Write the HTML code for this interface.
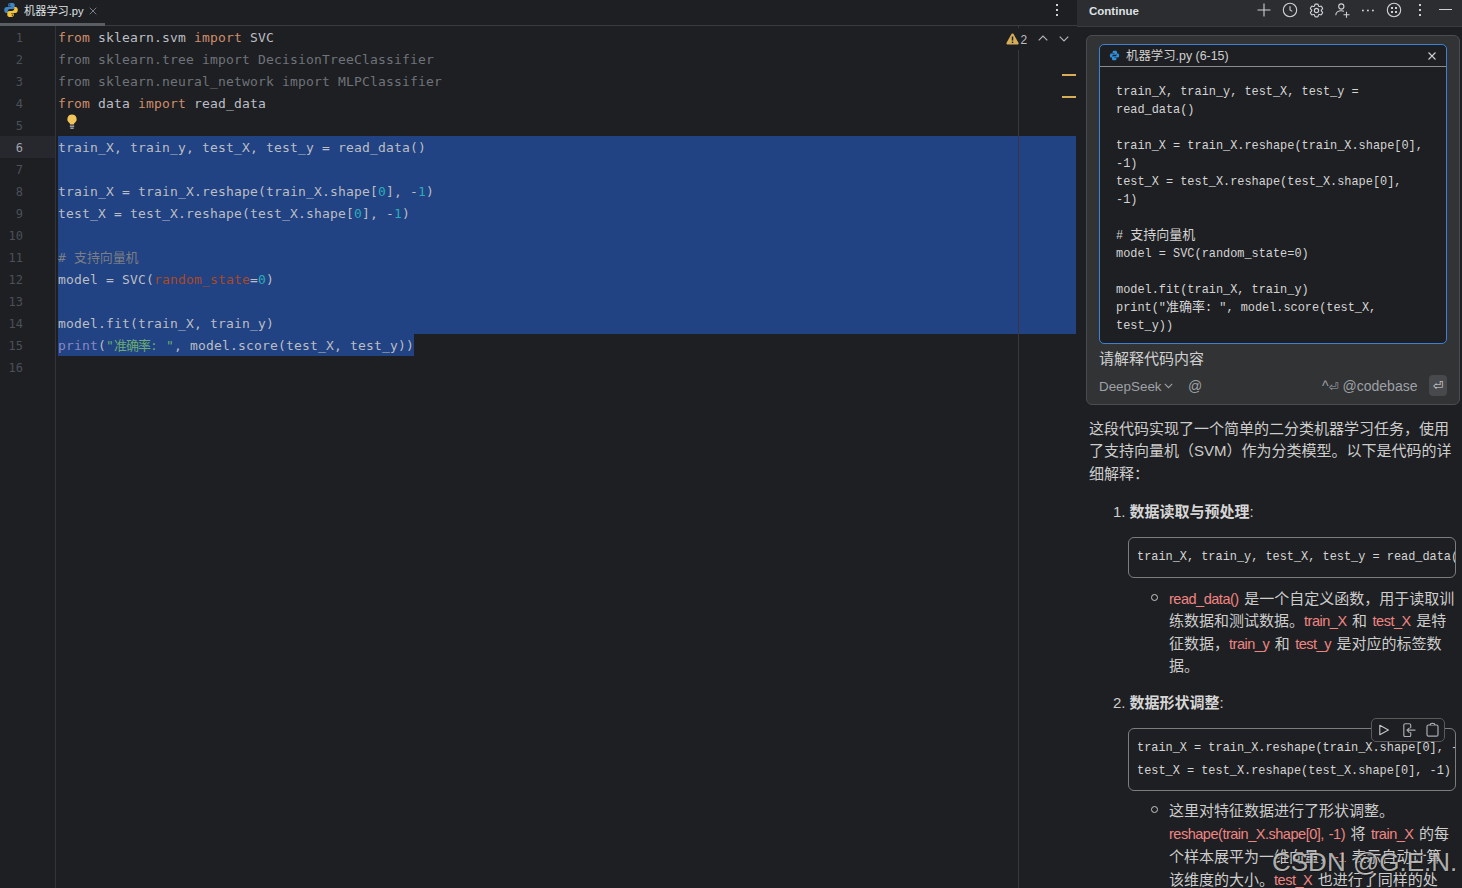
<!DOCTYPE html>
<html lang="zh-CN">
<head>
<meta charset="utf-8">
<title>机器学习.py</title>
<style>
*{box-sizing:border-box;margin:0;padding:0}
html,body{width:1462px;height:888px;overflow:hidden;background:#1e1f22}
body{position:relative;font-family:"Liberation Sans","Noto Sans CJK SC",sans-serif;color:#bcbec4}
.abs{position:absolute}
/* ---------- editor ---------- */
#editor{left:0;top:0;width:1077px;height:888px;background:#1e1f22;overflow:hidden}
#tabbar{left:0;top:0;width:1077px;height:26px;border-bottom:1px solid #393b40}
#tabul{left:0;top:23px;width:105px;height:3px;background:#5a5d63}
#tabname{left:24px;top:4px;font-size:11.2px;line-height:15px;color:#dfe1e5;white-space:nowrap}
#gutterline{left:55px;top:26px;width:1px;height:862px;background:#313438}
#marginline{left:1018px;top:26px;width:1px;height:862px;background:#36383d}
#caretrow{left:0;top:136px;width:55px;height:22px;background:#26282e}
.sel{background:#214283}
#sel1{left:58px;top:136px;width:1018px;height:198px}
#sel2{left:58px;top:334px;width:356px;height:22px}
.ln{left:0;width:23px;text-align:right;font:12px/22px "DejaVu Sans Mono","Liberation Mono",monospace;color:#4b5059;height:22px;margin-top:1px}
.ln.cur{color:#a1a3ab}
.cl{left:58px;height:22px;margin-top:1px;white-space:pre;font:13px/22px "DejaVu Sans Mono","Liberation Mono","Noto Sans CJK SC",monospace;letter-spacing:0.174px;color:#bcbec4}
.cl .cj{font-family:"Noto Sans CJK SC",sans-serif;font-size:13px;line-height:8px;letter-spacing:-0.1px}
.k{color:#cf8e6d}.u{color:#6f737a}.n{color:#2aacb8}.s{color:#6aab73}.c{color:#7a7e85}.b{color:#8888c6}.p{color:#aa4926}
.stripe{left:1062px;width:14px;height:2px;background:#d6ae58}
/* ---------- continue panel ---------- */
#panel{left:1077px;top:0;width:385px;height:888px;background:#1e1f22;overflow:hidden}
#phead{left:0;top:0;width:385px;height:27px;background:#2b2d30;border-bottom:1px solid #393b40}
#ptitle{left:12px;top:4px;font-size:11.5px;line-height:15px;font-weight:bold;color:#dfe1e5}
#inbox{left:9px;top:35px;width:374px;height:370px;background:#313335;border:1px solid #4a4c50;border-radius:6px}
#ctx{left:22px;top:44px;width:348px;height:300px;background:#1e1f22;border:1px solid #3b82d6;border-radius:5px;overflow:hidden}
#ctxhead{left:0;top:0;width:346px;height:22px;border-bottom:1px solid #8c8c8c}
#ctxname{left:26px;top:3.500px;font-size:12.4px;line-height:15px;color:#d0d0d0;white-space:nowrap}
.ccode{font:11.9px/18px "Liberation Mono","Noto Sans CJK SC",monospace;color:#d4d4d4;white-space:pre}
#ctxcode{left:16px;top:38px}
.md{font-size:15px;line-height:22.5px;color:#cdcdcd;white-space:nowrap;word-spacing:1.3px}
.md code{font-family:"Liberation Sans",sans-serif;color:#f08583;font-size:14.5px;letter-spacing:-0.48px}
.md b{margin-left:-1.4px;color:#d6d6d6}
.cb{left:51px;width:328px;border:1px solid #7d7d7d;border-radius:6px;background:#1e1f22;overflow:hidden;padding:8px 8px;font:11.9px/22.5px "Liberation Mono",monospace;color:#d4d4d4;white-space:pre}
.ccode .cj{font-size:13px;line-height:8px}
.bul{width:7px;height:7px;border:1px solid #c8c8c8;border-radius:50%}
</style>
</head>
<body>
<div id="editor" class="abs">
  <div id="tabbar" class="abs"></div>
  <div id="tabul" class="abs"></div>
  <div id="tabname" class="abs">机器学习.py</div>
  <div id="caretrow" class="abs"></div>
  <div id="gutterline" class="abs"></div>
  <div id="sel1" class="abs sel"></div>
  <div id="sel2" class="abs sel"></div>
  <div id="marginline" class="abs"></div>
  <div class="abs ln" style="top:26px">1</div>
  <div class="abs cl" style="top:26px"><span class="k">from</span> sklearn.svm <span class="k">import</span> SVC</div>
  <div class="abs ln" style="top:48px">2</div>
  <div class="abs cl" style="top:48px"><span class="u">from sklearn.tree import DecisionTreeClassifier</span></div>
  <div class="abs ln" style="top:70px">3</div>
  <div class="abs cl" style="top:70px"><span class="u">from sklearn.neural_network import MLPClassifier</span></div>
  <div class="abs ln" style="top:92px">4</div>
  <div class="abs cl" style="top:92px"><span class="k">from</span> data <span class="k">import</span> read_data</div>
  <div class="abs ln" style="top:114px">5</div>
  <div class="abs ln cur" style="top:136px">6</div>
  <div class="abs cl" style="top:136px">train_X, train_y, test_X, test_y = read_data()</div>
  <div class="abs ln" style="top:158px">7</div>
  <div class="abs ln" style="top:180px">8</div>
  <div class="abs cl" style="top:180px">train_X = train_X.reshape(train_X.shape[<span class="n">0</span>], -<span class="n">1</span>)</div>
  <div class="abs ln" style="top:202px">9</div>
  <div class="abs cl" style="top:202px">test_X = test_X.reshape(test_X.shape[<span class="n">0</span>], -<span class="n">1</span>)</div>
  <div class="abs ln" style="top:224px">10</div>
  <div class="abs ln" style="top:246px">11</div>
  <div class="abs cl" style="top:246px"><span class="c"># <span class="cj">支持向量机</span></span></div>
  <div class="abs ln" style="top:268px">12</div>
  <div class="abs cl" style="top:268px">model = SVC(<span class="p">random_state</span>=<span class="n">0</span>)</div>
  <div class="abs ln" style="top:290px">13</div>
  <div class="abs ln" style="top:312px">14</div>
  <div class="abs cl" style="top:312px">model.fit(train_X, train_y)</div>
  <div class="abs ln" style="top:334px">15</div>
  <div class="abs cl" style="top:334px"><span class="b">print</span>(<span class="s">"<span class="cj" style="letter-spacing:-1px">准确率</span>: "</span>, model.score(test_X, test_y))</div>
  <div class="abs ln" style="top:356px">16</div>
  <!-- python file icon -->
  <svg class="abs" style="left:3px;top:2px" width="16" height="16" viewBox="0 0 16 16">
    <path d="M7.9 1C5.6 1 5.2 2 5.2 2.9V4.4H8.1V5H3.6C2.3 5 1.2 5.9 1.2 8s1 3 2.2 3h1.3V9.2c0-1.2 1-2.2 2.3-2.2h2.9c1 0 1.8-.8 1.8-1.8V2.9C11.700 1.900 10.800 1 9.800 1z" fill="#3e86c6"/>
    <circle cx="6.6" cy="2.8" r=".65" fill="#1e1f22"/>
    <path d="M8.1 15c2.300 0 2.700-1 2.700-1.900V11.600H7.900V11h4.500c1.300 0 2.400-.9 2.400-3s-1-3-2.200-3h-1.300v1.800c0 1.200-1 2.200-2.300 2.200H6.100c-1 0-1.800.8-1.800 1.800v2.300c0 1 .9 1.900 1.900 1.900z" fill="#f2c53d"/>
    <circle cx="9.400" cy="13.200" r=".65" fill="#1e1f22"/>
  </svg>
  <!-- tab close -->
  <svg class="abs" style="left:89px;top:6.500px" width="8" height="8" viewBox="0 0 9 9"><path d="M.8.8 8.200 8.200M8.200.8.8 8.200" stroke="#868a91" stroke-width="1" fill="none"/></svg>
  <!-- tab menu dots -->
  <svg class="abs" style="left:1055px;top:3px" width="4" height="14" viewBox="0 0 4 14"><rect x="1" y="1" width="2" height="2" fill="#ced0d6"/><rect x="1" y="6" width="2" height="2" fill="#ced0d6"/><rect x="1" y="11" width="2" height="2" fill="#ced0d6"/></svg>
  <!-- bulb -->
  <svg class="abs" style="left:66px;top:114px" width="12" height="16" viewBox="0 0 12 16">
    <path d="M6 .6a4.600 4.600 0 0 0-2.600 8.400c.5.400.8.900.8 1.500h3.600c0-.6.300-1.100.8-1.500A4.600 4.600 0 0 0 6 .6z" fill="#f2c55c"/>
    <rect x="3.800" y="11.600" width="4.400" height="1.100" fill="#ced0d6"/><rect x="4.300" y="13.600" width="3.400" height="1.100" fill="#ced0d6"/>
  </svg>
  <!-- inspection widget -->
  <div class="abs" style="left:1000px;top:28px;width:76px;height:22px;background:#1e1f22"></div>
  <svg class="abs" style="left:1005.500px;top:32.500px" width="13" height="12" viewBox="0 0 14 13"><path d="M7 1.800 12.300 11.200H1.700z" fill="#d6ae58" stroke="#d6ae58" stroke-width="2.600" stroke-linejoin="round"/><rect x="6.200" y="3.800" width="1.600" height="4.400" fill="#1e1f22"/><rect x="6.200" y="9.300" width="1.600" height="1.600" fill="#1e1f22"/></svg>
  <div class="abs" style="left:1020.500px;top:32.500px;font-size:12px;line-height:15px;color:#bcbec4">2</div>
  <svg class="abs" style="left:1038px;top:35px" width="10" height="6" viewBox="0 0 10 6"><path d="M.7 5.300 5 1 9.300 5.300" stroke="#b4b8bf" stroke-width="1.100" fill="none"/></svg>
  <svg class="abs" style="left:1059px;top:36px" width="10" height="6" viewBox="0 0 10 6"><path d="M.7.700 5 5 9.300.700" stroke="#b4b8bf" stroke-width="1.100" fill="none"/></svg>
  <div class="abs stripe" style="top:74px"></div>
  <div class="abs stripe" style="top:96px"></div>
</div>
<div id="panel" class="abs">
  <div id="phead" class="abs"></div>
  <div id="ptitle" class="abs">Continue</div>
  <!-- header icons -->
  <svg class="abs" style="left:179.5px;top:2.700px" width="14" height="14" viewBox="0 0 14 14"><path d="M7 .5v13M.5 7h13" stroke="#ced0d6" stroke-width="1.100" fill="none"/></svg>
  <svg class="abs" style="left:205px;top:2px" width="16" height="16" viewBox="0 0 16 16"><circle cx="8" cy="8" r="6.700" stroke="#ced0d6" stroke-width="1.100" fill="none"/><path d="M8 4.200V8l2.300 1.400" stroke="#ced0d6" stroke-width="1.100" fill="none"/></svg>
  <svg class="abs" style="left:230.5px;top:1.500px" width="17" height="17" viewBox="0 0 24 24" fill="none" stroke="#ced0d6" stroke-width="1.600" stroke-linecap="round" stroke-linejoin="round"><path d="M9.594 3.940c.090-.542.560-.940 1.110-.940h2.593c.550 0 1.020.398 1.110.940l.213 1.281c.063.374.313.686.645.870.074.040.147.083.220.127.324.196.720.257 1.075.124l1.217-.456a1.125 1.125 0 0 1 1.370.490l1.296 2.247a1.125 1.125 0 0 1-.260 1.431l-1.003.827c-.293.240-.438.613-.431.992a6.759 6.759 0 0 1 0 .255c-.007.378.138.750.430.990l1.005.828c.424.350.534.954.260 1.430l-1.298 2.247a1.125 1.125 0 0 1-1.369.491l-1.217-.456c-.355-.133-.750-.072-1.076.124a6.570 6.570 0 0 1-.220.128c-.331.183-.581.495-.644.869l-.213 1.280c-.090.543-.560.941-1.110.941h-2.594c-.550 0-1.020-.398-1.110-.940l-.213-1.281c-.062-.374-.312-.686-.644-.870a6.520 6.520 0 0 1-.220-.127c-.325-.196-.720-.257-1.076-.124l-1.217.456a1.125 1.125 0 0 1-1.369-.490l-1.297-2.247a1.125 1.125 0 0 1 .260-1.431l1.004-.827c.292-.240.437-.613.430-.992a6.932 6.932 0 0 1 0-.255c.007-.378-.138-.750-.430-.990l-1.004-.828a1.125 1.125 0 0 1-.260-1.430l1.297-2.247a1.125 1.125 0 0 1 1.370-.491l1.216.456c.356.133.751.072 1.076-.124.072-.044.146-.087.220-.128.332-.183.582-.495.644-.869l.214-1.281z"/><circle cx="12" cy="12" r="3"/></svg>
  <svg class="abs" style="left:257px;top:2px" width="17" height="17" viewBox="0 0 17 17" fill="none" stroke="#ced0d6" stroke-width="1.100"><circle cx="7.300" cy="4.500" r="2.600"/><path d="M1.800 13.200c0-2.700 2.400-4.400 5.500-4.400 1 0 1.900.2 2.700.5"/><path d="M12.500 9.800v6M9.500 12.800h6"/></svg>
  <svg class="abs" style="left:284px;top:8.500px" width="14" height="3" viewBox="0 0 14 3"><rect x="1" y=".7" width="1.800" height="1.600" fill="#ced0d6"/><rect x="6" y=".7" width="1.800" height="1.600" fill="#ced0d6"/><rect x="11" y=".7" width="1.800" height="1.600" fill="#ced0d6"/></svg>
  <svg class="abs" style="left:309px;top:2px" width="16" height="16" viewBox="0 0 16 16"><circle cx="8" cy="8" r="6.700" stroke="#ced0d6" stroke-width="1.100" fill="none"/><rect x="5" y="5" width="2" height="2" fill="#ced0d6"/><rect x="9" y="5" width="2" height="2" fill="#ced0d6"/><rect x="5" y="9" width="2" height="2" fill="#ced0d6"/><rect x="9" y="9" width="2" height="2" fill="#ced0d6"/></svg>
  <svg class="abs" style="left:341px;top:3px" width="4" height="14" viewBox="0 0 4 14"><rect x="1" y="1" width="2" height="2" fill="#ced0d6"/><rect x="1" y="6" width="2" height="2" fill="#ced0d6"/><rect x="1" y="11" width="2" height="2" fill="#ced0d6"/></svg>
  <div class="abs" style="left:362.4px;top:9.200px;width:13px;height:1.200px;background:#ced0d6"></div>
  <!-- input box -->
  <div id="inbox" class="abs"></div>
  <div id="ctx" class="abs">
    <div id="ctxhead" class="abs"></div>
    <svg class="abs" style="left:9px;top:5px" width="11" height="11" viewBox="0 0 16 16">
      <path d="M7.9 1C5.600 1 5.200 2 5.200 2.900V4.400H8.100V5H3.600C2.300 5 1.200 5.900 1.200 8s1 3 2.200 3h1.300V9.200c0-1.200 1-2.200 2.300-2.200h2.900c1 0 1.800-.8 1.800-1.800V2.900C11.700 1.900 10.800 1 9.800 1z" fill="#2e8fdc"/>
      <path d="M8.100 15c2.300 0 2.700-1 2.700-1.900V11.600H7.900V11h4.500c1.300 0 2.400-.9 2.400-3s-1-3-2.200-3h-1.300v1.800c0 1.200-1 2.200-2.300 2.200H6.100c-1 0-1.800.8-1.800 1.800v2.300c0 1 .9 1.900 1.900 1.900z" fill="#2e8fdc"/>
    </svg>
    <div id="ctxname" class="abs">机器学习.py (6-15)</div>
    <svg class="abs" style="left:327.500px;top:7px" width="8" height="8" viewBox="0 0 8 8"><path d="M.5.500 7.500 7.500M7.500.500.500 7.500" stroke="#d0d0d0" stroke-width="1.100" fill="none"/></svg>
    <div id="ctxcode" class="abs ccode">train_X, train_y, test_X, test_y =
read_data()

train_X = train_X.reshape(train_X.shape[0],
-1)
test_X = test_X.reshape(test_X.shape[0],
-1)

# <span class="cj">支持向量机</span>
model = SVC(random_state=0)

model.fit(train_X, train_y)
print("<span class="cj">准确率</span>: ", model.score(test_X,
test_y))</div>
  </div>
  <div class="abs" style="left:22px;top:347.500px;font-size:15px;line-height:22px;color:#d0d0d0;white-space:nowrap">请解释代码内容</div>
  <div class="abs" style="left:22px;top:378px;font-size:13.4px;line-height:18px;color:#9fa1a6;white-space:nowrap">DeepSeek</div>
  <svg class="abs" style="left:87px;top:383px" width="9" height="6" viewBox="0 0 9 6"><path d="M.8.800 4.500 4.700 8.200.800" stroke="#9fa1a6" stroke-width="1.100" fill="none"/></svg>
  <div class="abs" style="left:111px;top:376.500px;font-size:14px;line-height:18px;color:#9fa1a6">@</div>
  <div class="abs" style="left:245px;top:376.500px;font-size:14px;line-height:18px;color:#9fa1a6;white-space:nowrap">^<span style="font-family:'DejaVu Sans',sans-serif;font-size:12px">⏎</span> @codebase</div>
  <div class="abs" style="left:352px;top:375px;width:18px;height:21px;background:#47494d;border-radius:4px"></div>
  <div class="abs" style="left:352px;top:375px;width:18px;height:21px;text-align:center;font-family:'DejaVu Sans',sans-serif;font-size:12.500px;line-height:21px;color:#dcdcdc">⏎</div>
  <div class="abs md" style="left:12px;top:417.75px">这段代码实现了一个简单的二分类机器学习任务，使用</div>
  <div class="abs md" style="left:12px;top:440.25px">了支持向量机（SVM）作为分类模型。以下是代码的详</div>
  <div class="abs md" style="left:12px;top:462.75px">细解释：</div>
  <div class="abs md" style="left:36px;top:500.75px">1. <b>数据读取与预处理</b>:</div>
  <div class="abs cb" style="top:537px">train_X, train_y, test_X, test_y = read_data()</div>
  <div class="abs bul" style="left:74px;top:594px"></div>
  <div class="abs md" style="left:92px;top:587.75px"><code>read_data()</code> 是一个自定义函数，用于读取训</div>
  <div class="abs md" style="left:92px;top:610.25px">练数据和测试数据。<code>train_X</code> 和 <code>test_X</code> 是特</div>
  <div class="abs md" style="left:92px;top:632.75px">征数据，<code>train_y</code> 和 <code>test_y</code> 是对应的标签数</div>
  <div class="abs md" style="left:92px;top:655.25px">据。</div>
  <div class="abs md" style="left:36px;top:691.75px">2. <b>数据形状调整</b>:</div>
  <div class="abs cb" style="top:728px">train_X = train_X.reshape(train_X.shape[0], -1)
test_X = test_X.reshape(test_X.shape[0], -1)</div>
  <div class="abs" style="left:294px;top:718px;width:74px;height:24px;border:1px solid #5a5a5a;border-radius:5px;background:#1e1f22"></div>
  <svg class="abs" style="left:301px;top:724px" width="12" height="12" viewBox="0 0 12 12"><path d="M1.800 1.300 10.400 6 1.800 10.700z" stroke="#c4c6ca" stroke-width="1.100" fill="none" stroke-linejoin="round"/></svg>
  <svg class="abs" style="left:325.5px;top:722.500px" width="13.500" height="14.400" viewBox="0 0 14 15" fill="none" stroke="#a9acb2" stroke-width="1.200" stroke-linecap="round" stroke-linejoin="round"><path d="M8 5V2.200a1.400 1.400 0 0 0-1.400-1.400H2.200A1.400 1.400 0 0 0 .8 2.200v10.600a1.400 1.400 0 0 0 1.400 1.400h4.400A1.400 1.400 0 0 0 8 12.800V10"/><path d="M12.500 7.500H4.200M6.400 5.300 4.200 7.500l2.200 2.200"/></svg>
  <svg class="abs" style="left:349px;top:722px" width="13" height="15" viewBox="0 0 13 15" fill="none" stroke="#a9acb2" stroke-width="1.200"><rect x="1" y="3" width="11" height="11.200" rx="1.500"/><path d="M4.200 3.100c0-1.100.9-1.700 2.300-1.700s2.300.6 2.300 1.700" fill="#1e1f22"/></svg>
  <div class="abs bul" style="left:74px;top:806px"></div>
  <div class="abs md" style="left:92px;top:799.75px">这里对特征数据进行了形状调整。</div>
  <div class="abs md" style="left:92px;top:822.75px"><code>reshape(train_X.shape[0], -1)</code> 将 <code>train_X</code> 的每</div>
  <div class="abs md" style="left:92px;top:845.75px">个样本展平为一维向量，<code>-1</code> 表示自动计算</div>
  <div class="abs md" style="left:92px;top:868.75px">该维度的大小。<code>test_X</code> 也进行了同样的处</div>
  <div class="abs" id="wm" style="left:195px;top:846.500px;font-size:26px;line-height:30px;white-space:nowrap;color:rgba(215,215,215,.80);text-shadow:1px 1px 0 rgba(20,20,20,.75),-1px -1px 0 rgba(20,20,20,.35)">CSDN @G.E.N.</div>
</div>
</body>
</html>
